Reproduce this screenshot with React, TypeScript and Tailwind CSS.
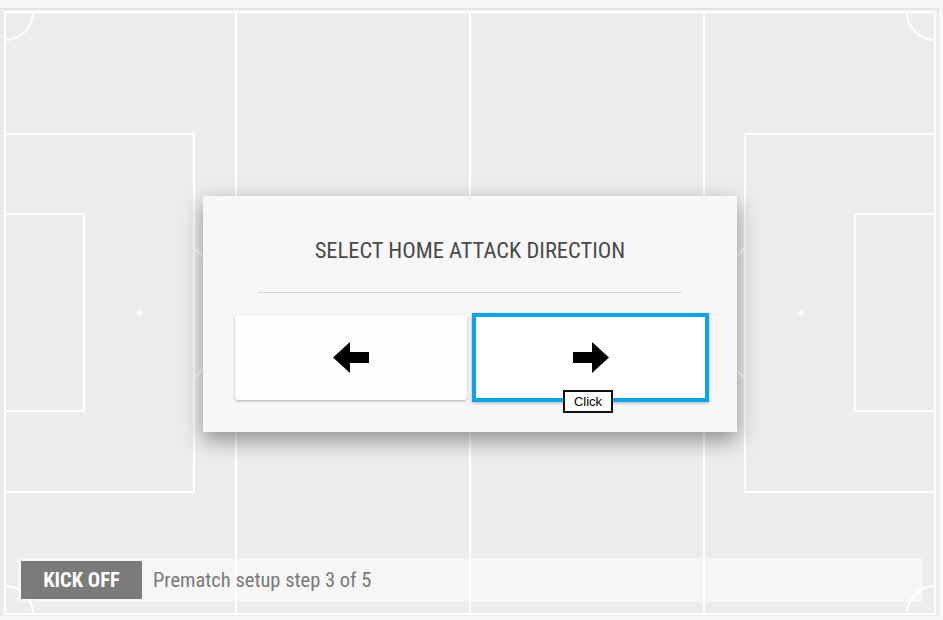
import React from "react";

const condensed = {
    fontFamily:
        "'Roboto Condensed', 'Liberation Sans Narrow', 'DejaVu Sans Condensed', Roboto, sans-serif",
    fontStretch: "condensed",
};

function PitchLines() {
    return (
        <svg
            className="absolute inset-0"
            width="939"
            height="608"
            viewBox="0 8 939 608"
            fill="none"
            stroke="#ffffff"
            strokeWidth="2"
        >
            <rect x="5" y="12" width="930" height="602" />
            <line x1="236" y1="12" x2="236" y2="614" />
            <line x1="470" y1="12" x2="470" y2="614" />
            <line x1="704" y1="12" x2="704" y2="614" />

            <rect x="5" y="134" width="189" height="358" />
            <rect x="5" y="214" width="79" height="197" />
            <rect x="745" y="134" width="190" height="358" />
            <rect x="855" y="214" width="80" height="197" />

            <path d="M194 248 A85 85 0 0 1 194 378" />
            <path d="M745 248 A85 85 0 0 0 745 378" />
            <circle cx="470" cy="313" r="90" />

            <circle cx="139" cy="313" r="2.5" fill="#ffffff" stroke="none" />
            <circle cx="801" cy="313" r="2.5" fill="#ffffff" stroke="none" />
            <circle cx="470" cy="313" r="2.5" fill="#ffffff" stroke="none" />

            <path d="M33 12 A28 28 0 0 1 5 40" />
            <path d="M907 12 A28 28 0 0 0 935 40" />
            <path d="M5 586 A28 28 0 0 1 33 614" />
            <path d="M907 614 A28 28 0 0 1 935 586" />
        </svg>
    );
}

function Arrow({ dir }: { dir: "left" | "right" }) {
    return (
        <svg
            width="36"
            height="31"
            viewBox="0 0 36 31"
            className={dir === "right" ? "-scale-x-100" : ""}
        >
            <path d="M0 15.5 L17 0 L17 10 L36 10 L36 21 L17 21 L17 31 Z" fill="#000000" />
        </svg>
    );
}

export default function App() {
    return (
        <div className="w-[943px] h-[620px] bg-[#f7f7f7] overflow-hidden">
            <div className="relative mt-2 w-[939px] h-[608px] bg-[#ececec] shadow-[inset_0_1px_2px_rgba(0,0,0,0.06)]">
                <PitchLines />

                {/* direction picker */}
                <div className="absolute left-[203px] top-[188px] w-[534px] h-[236px] bg-[#f7f7f7] shadow-[0_8px_20px_rgba(0,0,0,0.4)] flex flex-col">
                    <h2
                        className="pt-[40px] h-[68px] text-center text-[22.5px] leading-[28px] text-[#4a4a4a]"
                        style={condensed}
                    >
                        SELECT HOME ATTACK DIRECTION
                    </h2>
                    <div className="mx-[55px] mt-[28px] h-px bg-[#d4d4d4]" />
                    <div className="mt-[20px] pl-[32px] flex items-center gap-[5px] h-[89px]">
                        <button className="w-[232px] h-[85px] bg-[#fdfdfd] rounded-[3px] shadow-[0_1px_3px_rgba(0,0,0,0.3)] flex items-center justify-center">
                            <Arrow dir="left" />
                        </button>
                        <button className="relative w-[237px] h-[89px] bg-white border-[4px] border-[#0aa5e6] shadow-[0_1px_3px_rgba(0,0,0,0.3)] flex items-center justify-center">
                            <Arrow dir="right" />
                            <span className="absolute left-[87px] top-[73px] w-[50px] h-[23px] bg-white border-2 border-[#0b140b] flex items-center justify-center text-[13px] text-black font-['Liberation_Sans',Arial,sans-serif]">
                                Click
                            </span>
                        </button>
                    </div>
                </div>

                {/* status bar */}
                <div className="absolute left-[18px] top-[550px] w-[904px] h-[44px] bg-white/55 p-[3px] flex items-center">
                    <div
                        className="w-[121px] h-[38px] bg-[#7b7b7b] text-white font-bold text-[20.5px] flex items-center justify-center"
                        style={condensed}
                    >
                        KICK OFF
                    </div>
                    <span className="ml-[11px] text-[20.5px] text-[#7a7a7a]" style={condensed}>
                        Prematch setup step 3 of 5
                    </span>
                </div>
            </div>
        </div>
    );
}
